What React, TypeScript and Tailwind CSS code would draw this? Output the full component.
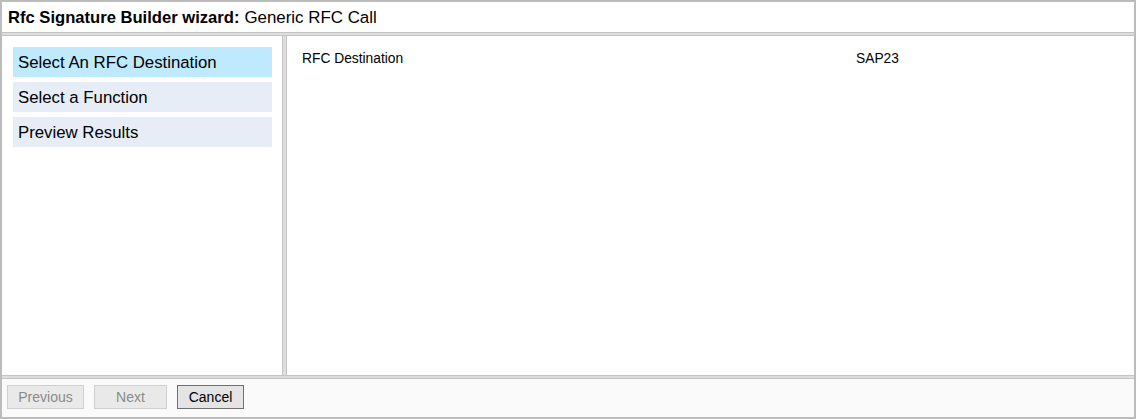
export default function App() {
  const steps = [
    { label: 'Select An RFC Destination', active: true },
    { label: 'Select a Function', active: false },
    { label: 'Preview Results', active: false },
  ]

  return (
    <div
      className="w-[1136px] h-[419px] flex flex-col gap-[2px] bg-[#dedede] border-2 border-[#bcbcbc] text-black"
      style={{ fontFamily: '"Liberation Sans", Arial, sans-serif' }}
    >
      {/* Title */}
      <div className="h-[31px] shrink-0 bg-white border-b border-[#c4c4c4] flex items-center pt-[2px] px-[6px]">
        <span className="font-bold text-[16.6px]">Rfc Signature Builder wizard:</span>
        <span className="ml-[5px] text-[16.9px]">Generic RFC Call</span>
      </div>

      {/* Body */}
      <div className="flex-1 flex gap-[3px] border-y border-[#c4c4c4]">
        <div className="w-[281px] shrink-0 bg-white border-r border-[#c4c4c4] p-[11px] pr-[10px] flex flex-col gap-[5px]">
          {steps.map((s) => (
            <div
              key={s.label}
              className={
                s.active
                  ? 'h-[30px] flex items-center pt-[2px] px-[5px] text-[16.8px] bg-[#bfe9fd]'
                  : 'h-[30px] flex items-center pt-[2px] px-[5px] text-[16.8px] bg-[#e6edf6]'
              }
            >
              {s.label}
            </div>
          ))}
        </div>
        <div className="flex-1 bg-white border-l border-[#c4c4c4] pt-[15px] pl-[15px]">
          <div className="flex text-[13.8px] h-[17px] items-center">
            <span className="w-[554px]">RFC Destination</span>
            <span>SAP23</span>
          </div>
        </div>
      </div>

      {/* Footer */}
      <div className="h-[39px] shrink-0 bg-[#fafafa] border-t border-[#c4c4c4] flex items-start pt-[6px] gap-[10px] px-[5px]">
        <button
          disabled
          className="h-[24px] w-[77px] bg-[#e9e9e9] border border-[#cfcfcf] text-[#8a8a8a] text-[14px]"
        >
          Previous
        </button>
        <button
          disabled
          className="h-[24px] w-[73px] bg-[#e9e9e9] border border-[#cfcfcf] text-[#8a8a8a] text-[14px]"
        >
          Next
        </button>
        <button className="h-[24px] w-[67px] bg-[#e4e4e4] border border-[#707070] text-black text-[14px]">
          Cancel
        </button>
      </div>
    </div>
  )
}
